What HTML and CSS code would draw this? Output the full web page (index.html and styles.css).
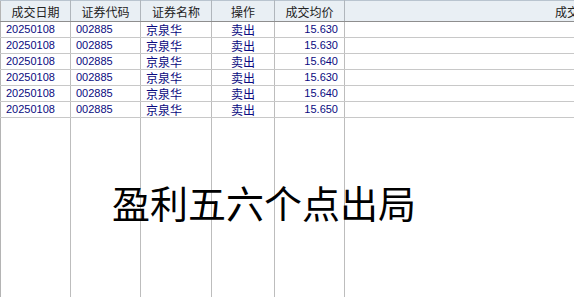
FILE: index.html
```html
<!DOCTYPE html>
<html lang="zh-CN">
<head>
    <meta charset="UTF-8">
    <title>成交查询</title>
    <link rel="stylesheet" href="styles.css">
</head>
<body>

<div class="grid-wrap">
    <table class="trades">
        <colgroup>
            <col class="c-date">
            <col class="c-code">
            <col class="c-name">
            <col class="c-op">
            <col class="c-price">
            <col class="c-amount">
        </colgroup>
        <thead>
            <tr>
                <th>成交日期</th>
                <th>证券代码</th>
                <th>证券名称</th>
                <th>操作</th>
                <th>成交均价</th>
                <th class="num">成交金额</th>
            </tr>
        </thead>
        <tbody>
            <tr><td>20250108</td><td>002885</td><td>京泉华</td><td class="op">卖出</td><td class="num">15.630</td><td></td></tr>
            <tr><td>20250108</td><td>002885</td><td>京泉华</td><td class="op">卖出</td><td class="num">15.630</td><td></td></tr>
            <tr><td>20250108</td><td>002885</td><td>京泉华</td><td class="op">卖出</td><td class="num">15.640</td><td></td></tr>
            <tr><td>20250108</td><td>002885</td><td>京泉华</td><td class="op">卖出</td><td class="num">15.630</td><td></td></tr>
            <tr><td>20250108</td><td>002885</td><td>京泉华</td><td class="op">卖出</td><td class="num">15.640</td><td></td></tr>
            <tr><td>20250108</td><td>002885</td><td>京泉华</td><td class="op">卖出</td><td class="num">15.650</td><td></td></tr>
            <tr class="filler"><td></td><td></td><td></td><td></td><td></td><td></td></tr>
        </tbody>
    </table>

    <div class="caption">盈利五六个点出局</div>
</div>

</body>
</html>
```

FILE: styles.css
```css
body {
    margin: 0;
    background: #fff;
    font-family: "Liberation Sans", "Noto Sans CJK SC", sans-serif;
}

.grid-wrap {
    position: relative;
    width: 574px;
    height: 297px;
    overflow: hidden;
    background: #fff;
}

.trades {
    table-layout: fixed;
    border-collapse: collapse;
    width: 607px;
    border-left: 1px solid #b4b4b4;
}

.c-date { width: 70px; }
.c-code { width: 70px; }
.c-name { width: 71px; }
.c-op { width: 63px; }
.c-price { width: 70px; }
.c-amount { width: 263px; }

.trades th {
    height: 20px;
    padding: 0 4px;
    font-weight: normal;
    font-size: 12px;
    color: #222;
    background: #e9eff4;
    border-top: 1px solid #b9c4cf;
    border-bottom: 1px solid #8e8e8e;
    border-right: 1px solid #b0b6bc;
    text-align: center;
    white-space: nowrap;
    overflow: hidden;
    font-family: "Noto Sans CJK SC", sans-serif;
}

.trades th.num {
    text-align: right;
}

.trades td {
    height: 15px;
    padding: 0 5px;
    font-size: 11px;
    line-height: 15px;
    color: #0a0a80;
    border-bottom: 1px solid #c8c8c8;
    border-right: 1px solid #bdbdbd;
    white-space: nowrap;
    overflow: hidden;
}

.trades td:nth-child(3),
.trades td.op {
    font-size: 12px;
    font-family: "Noto Sans CJK SC", sans-serif;
}

.trades td.op {
    text-align: center;
}

.trades td.num {
    text-align: right;
    padding-right: 6px;
}

.trades .filler td {
    height: 180px;
    border-bottom: none;
}

/* note written over the grid */
.caption {
    position: absolute;
    left: 112px;
    top: 183px;
    font-family: "Noto Sans CJK SC", sans-serif;
    font-size: 38px;
    line-height: 1;
    color: #000;
    white-space: nowrap;
}
```
